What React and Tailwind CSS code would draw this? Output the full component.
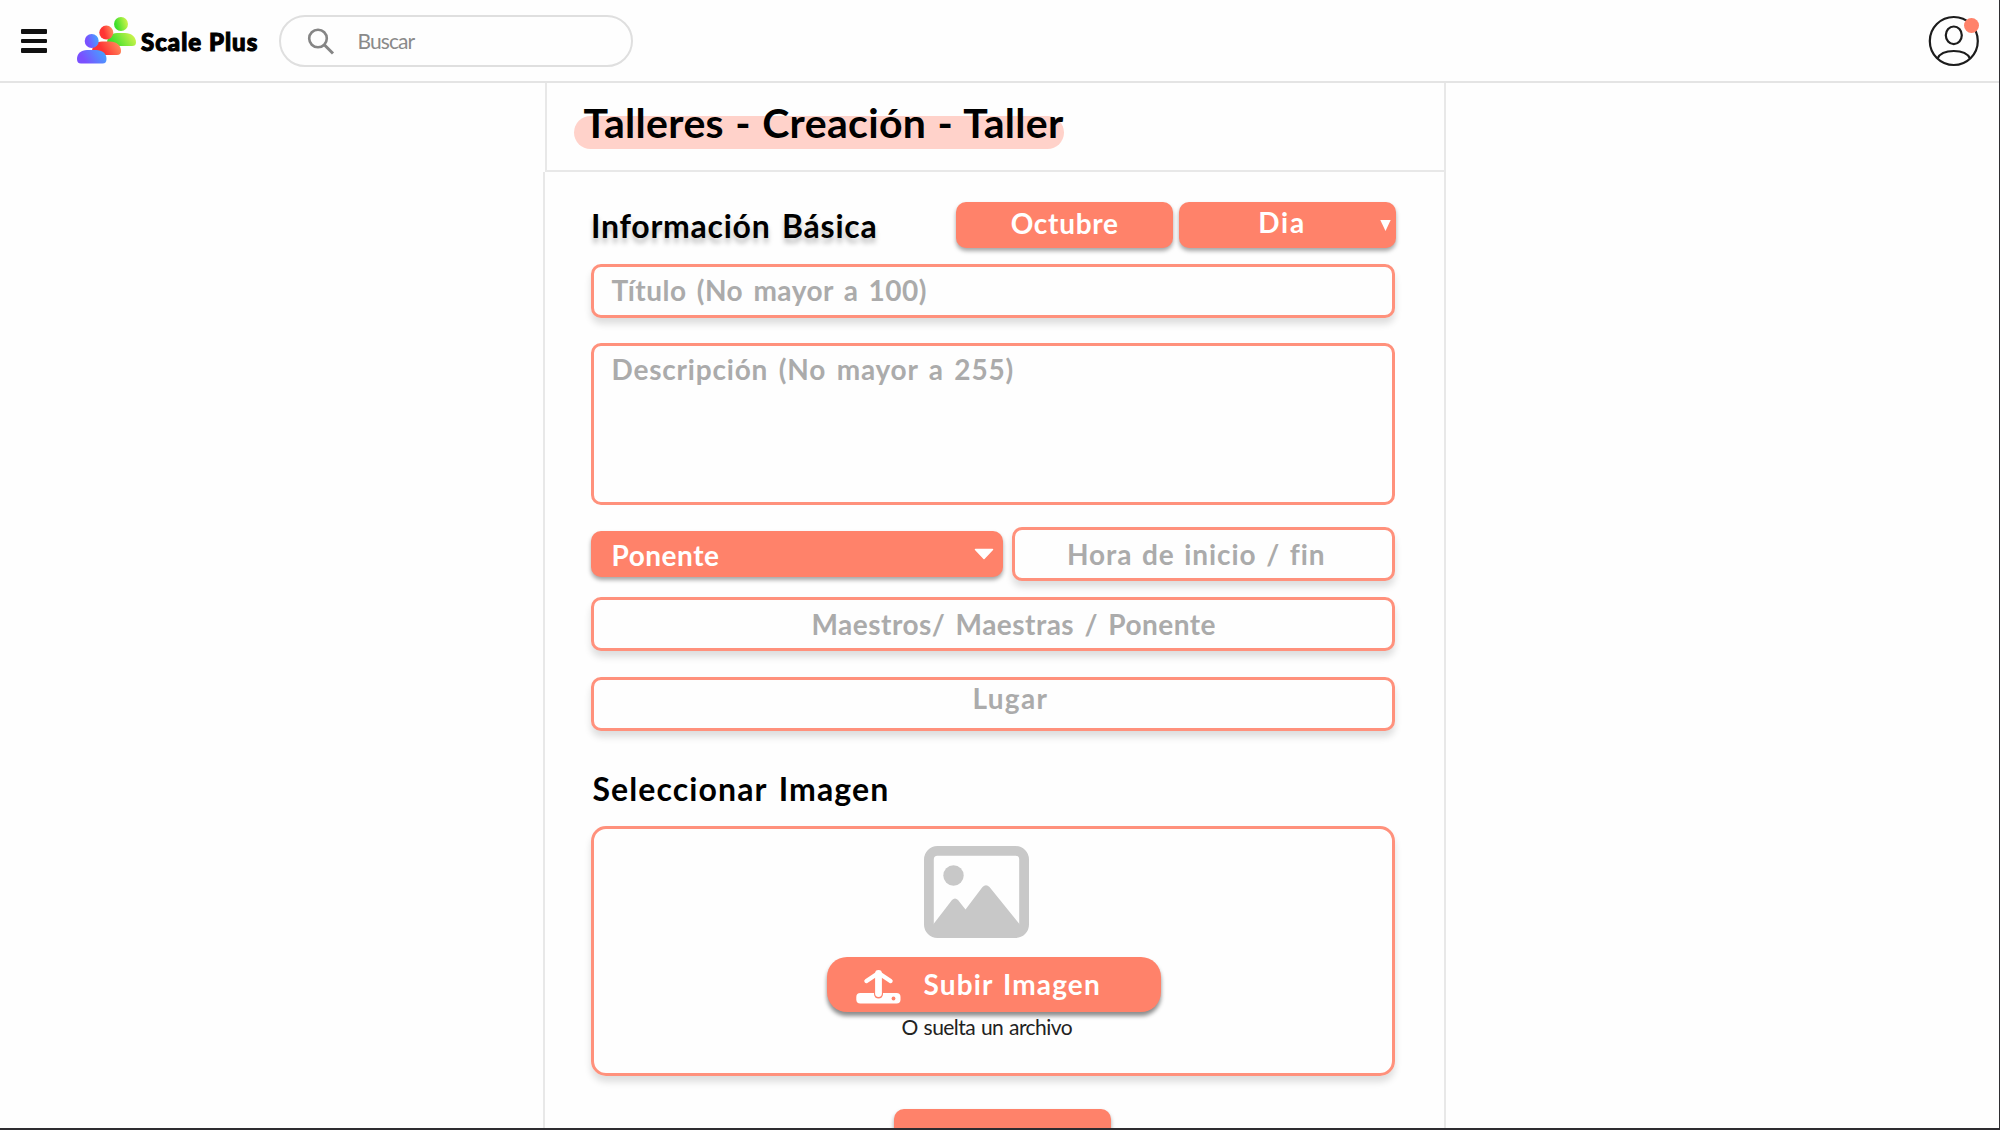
function Logo() {
  return (
    <svg className="h-12 w-15 shrink-0" viewBox="0 0 60 48">
      <defs>
        <linearGradient id="blue" x1="0" x2="1" y1="0.3" y2="0">
          <stop offset="0.1" stopColor="#7a50ff" />
          <stop offset="1" stopColor="#3fadff" />
        </linearGradient>
        <linearGradient id="red" x1="0" x2="1" y1="0.3" y2="0">
          <stop offset="0.25" stopColor="#ff3434" />
          <stop offset="1" stopColor="#ff9a62" />
        </linearGradient>
        <linearGradient id="green" x1="0" x2="1" y1="0.5" y2="0.2">
          <stop offset="0.1" stopColor="#3ddf2c" />
          <stop offset="1" stopColor="#d9f54e" />
        </linearGradient>
      </defs>
      <path d="M31 27.500C31 20.500 35 17 41 17H49C55.500 17 60 21 60 26.500Q60 30 56 30H31Z" fill="url(#green)" />
      <circle cx="45" cy="8" r="7" fill="url(#green)" />
      <path d="M16 36C16 29 20 25.500 26 25.500H34C40.500 25.500 45 29.500 45 35Q45 39 41 39H16Z" fill="url(#red)" />
      <circle cx="30.300" cy="16.600" r="7" fill="url(#red)" />
      <path d="M1 43C1 37.500 5 34 11 34H20C26.500 34 30.500 37.500 30.500 43Q30.500 47.500 26.500 47.500H5Q1 47.500 1 43Z" fill="url(#blue)" />
      <circle cx="15.700" cy="25" r="7" fill="url(#blue)" />
    </svg>
  );
}

function Header() {
  return (
    <header className="flex h-[82.500px] shrink-0 items-start border-b-2 border-[#e4e4e4]">
      <button aria-label="Menú" className="mt-[29px] ml-[21px] flex w-[26px] flex-col gap-[5px]">
        <span className="h-[4.500px] rounded-[1px] bg-[#111]" />
        <span className="h-[4.500px] rounded-[1px] bg-[#111]" />
        <span className="h-[4.500px] rounded-[1px] bg-[#111]" />
      </button>
      <div className="mt-[15.500px] ml-[29px] flex">
        <Logo />
        <span className="mt-[14px] ml-[5px] w-[138px] text-[24px] leading-[24px] font-black tracking-[1.020px] whitespace-nowrap text-black [-webkit-text-stroke:1.1px_black]">
          Scale Plus
        </span>
      </div>
      <div className="mt-[15px] flex h-[52px] w-[354px] rounded-full border-2 border-[#dfdfdf]">
        <svg className="mt-[10px] ml-[26px] h-7 w-7" viewBox="0 0 28 28" fill="none" stroke="#858585" strokeWidth="2.600">
          <circle cx="11" cy="11.500" r="8.800" />
          <path d="M17.500 18L26 26.500" strokeWidth="3" />
        </svg>
        <span className="mt-[13px] ml-[22.500px] text-[21px] leading-[21px] font-normal tracking-[-0.920px] text-[#8a8a8a]">Buscar</span>
      </div>
      <div className="relative mt-[15px] mr-[19.500px] ml-auto h-[52px] w-[52px]">
        <svg className="h-full w-full" viewBox="0 0 52 52" fill="none" stroke="#1c1c1c" strokeWidth="2.200">
          <circle cx="25.800" cy="26" r="24" />
          <ellipse cx="25.800" cy="20.300" rx="8" ry="8.800" />
          <path d="M9.500 43.500C12 38 18 36 25.800 36S39.500 38 42 43.500" />
        </svg>
        <span className="absolute top-[2.500px] right-[0.500px] h-[15px] w-[15px] rounded-full bg-[#ff826a]" />
      </div>
    </header>
  );
}

function ImageIcon() {
  return (
    <svg className="ml-[329.500px] h-[92px] w-[105px]" viewBox="0 0 105 92">
      <rect x="4.900" y="4.900" width="95.200" height="82.200" rx="8.500" fill="none" stroke="#c8c8c8" strokeWidth="9.800" />
      <circle cx="29.500" cy="29.500" r="10.200" fill="#c8c8c8" />
      <path d="M8 80L28 54Q31 51 34 54L41.500 63.500L58.500 41Q62 37.500 65.500 41L97 80V86H8Z" fill="#c8c8c8" />
    </svg>
  );
}

function UploadIcon() {
  return (
    <svg className="mt-[12.500px] ml-[28.500px] h-[34px] w-[45px]" viewBox="0 0 45 34" fill="none">
      <rect x="0.300" y="23" width="44.200" height="10.600" rx="4" fill="#fff" />
      <path d="M22.500 4V24" stroke="#ff826a" strokeWidth="9" strokeLinecap="round" />
      <path d="M22.500 3.500V23.500" stroke="#fff" strokeWidth="6.800" strokeLinecap="round" />
      <path d="M10.500 11L22.500 3L34.500 11" stroke="#fff" strokeWidth="4.500" strokeLinecap="round" strokeLinejoin="round" />
      <circle cx="37.500" cy="28.500" r="1.900" fill="#ff826a" />
    </svg>
  );
}

function Field({ className, children }) {
  return (
    <div
      className={`rounded-[10px] border-3 border-[#ff917c] bg-[#fefefe] text-[28px] leading-[28px] font-bold whitespace-nowrap text-[#ababab] ${className}`}
    >
      {children}
    </div>
  );
}

function Filled({ className, children }) {
  return (
    <div
      className={`flex rounded-[10px] bg-[#ff826a] text-[28px] leading-[28px] font-bold whitespace-nowrap text-white shadow-[0_3px_4px_rgba(0,0,0,0.35)] ${className}`}
    >
      {children}
    </div>
  );
}

export default function App() {
  return (
    <div className="h-[1130px] w-[2000px] overflow-hidden border-r-[1.500px] border-b-2 border-[#2e2d31] bg-[#fefefe] font-[Lato,sans-serif]">
      <div className="flex h-full flex-col overflow-hidden">
        <Header />
        <section className="ml-[545px] h-[89.500px] w-[900.500px] shrink-0 border-x-2 border-b-2 border-[#e8e8e8] pt-[19.500px] pl-[26.500px]">
          <div className="relative w-[490px]">
            <span className="absolute top-[14px] left-0 h-[32.500px] w-[490px] rounded-full bg-[#ffd2ca]" />
            <h1 className="relative pl-[10px] text-[41px] leading-[41px] font-bold tracking-[0.340px] whitespace-nowrap text-black [word-spacing:1px]">
              Talleres - Creación - Taller
            </h1>
          </div>
        </section>
        <main className="ml-[543px] flex h-[960px] w-[902.500px] shrink-0 flex-col border-x-2 border-[#e8e8e8] pr-[48px] pl-[46px]">
          <div className="flex h-[91.500px] shrink-0 items-start">
            <h2 className="mt-[38px] w-[366px] text-[32px] leading-[32px] font-bold tracking-[0.740px] whitespace-nowrap text-black [text-shadow:0_5px_5px_rgba(0,0,0,0.25)] [word-spacing:3px]">
              Información Básica
            </h2>
            <Filled className="mt-[29.500px] h-[46px] w-[217px] pt-[7px] pl-[54.500px]">
              <span className="tracking-[0.700px]">Octubre</span>
            </Filled>
            <Filled className="mt-[29.500px] ml-[6px] h-[46px] w-[217px] pt-[6px] pl-[79.500px]">
              <span className="w-[122px] tracking-[1.700px]">Dia</span>
              <svg className="mt-[12px] h-[11px] w-[11px]" viewBox="0 0 11 11">
                <path d="M0.300 0H10.700L5.500 11Z" fill="#fff" />
              </svg>
            </Filled>
          </div>

          <Field className="h-[54px] w-[804px] shrink-0 pt-[9.500px] pl-[17.500px] tracking-[0.480px] shadow-[0_6px_7px_rgba(0,0,0,0.13)] [word-spacing:3px]">
            Título (No mayor a 100)
          </Field>
          <Field className="mt-[25.500px] h-[161.500px] w-[804px] shrink-0 pt-[9px] pl-[17.500px] tracking-[0.800px] [word-spacing:3px]">
            Descripción (No mayor a 255)
          </Field>

          <div className="mt-[22px] flex h-[54px] w-[804px] shrink-0 justify-between">
            <Filled className="mt-[4.500px] h-[45.500px] w-[412px] pt-[10px] pl-[20.500px]">
              <span className="w-[362px] tracking-[0.520px]">Ponente</span>
              <svg className="mt-[7px] h-[12px] w-[20px]" viewBox="0 0 20 12">
                <path d="M1.500 1.500H18.500L10 10.500Z" fill="#fff" stroke="#fff" strokeWidth="1.500" strokeLinejoin="round" />
              </svg>
            </Filled>
            <Field className="w-[383px] pt-[10.500px] pl-[52px] tracking-[0.900px] shadow-[0_6px_7px_rgba(0,0,0,0.13)] [word-spacing:2px]">
              Hora de inicio / fin
            </Field>
          </div>

          <Field className="mt-[16px] h-[54px] w-[804px] shrink-0 pt-[10.500px] pl-[217.500px] tracking-[0.480px] shadow-[0_6px_7px_rgba(0,0,0,0.13)] [word-spacing:3px]">
            Maestros/ Maestras / Ponente
          </Field>
          <Field className="mt-[26.500px] h-[54px] w-[804px] shrink-0 pt-[4px] pl-[378.500px] tracking-[1.300px] shadow-[0_6px_7px_rgba(0,0,0,0.13)]">
            Lugar
          </Field>

          <h2 className="mt-[41.500px] ml-[1.500px] h-[53px] shrink-0 text-[32px] leading-[32px] font-bold tracking-[1.100px] whitespace-nowrap text-black [word-spacing:3px]">
            Seleccionar Imagen
          </h2>
          <div className="h-[250px] w-[804px] shrink-0 rounded-[15px] border-3 border-[#ff917c] pt-[17px] shadow-[0_6px_7px_rgba(0,0,0,0.13)]">
            <ImageIcon />
            <Filled className="mt-[19.500px] ml-[233px] h-[54.500px] w-[333.500px] rounded-[20px]! shadow-[0_4px_4px_rgba(0,0,0,0.45)]!">
              <UploadIcon />
              <span className="mt-[12.500px] ml-[23px] tracking-[1.150px] [word-spacing:2px]">Subir Imagen</span>
            </Filled>
            <p className="mt-[4px] ml-[307.500px] text-[21px] leading-[21px] font-normal tracking-[-0.550px] whitespace-nowrap text-[#222] [word-spacing:1px]">
              O suelta un archivo
            </p>
          </div>
          <Filled className="mt-[33px] ml-[303px] h-[46px] w-[217px] shrink-0">
            <span />
          </Filled>
        </main>
      </div>
    </div>
  );
}
